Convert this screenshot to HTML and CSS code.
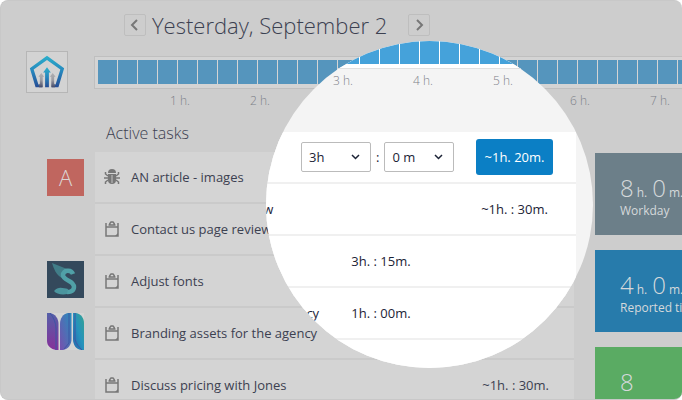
FILE: index.html
```html
<!DOCTYPE html>
<html lang="en">
<head>
  <meta charset="UTF-8">
  <meta name="viewport" content="width=device-width, initial-scale=1.0">
  <title>Time Tracker</title>
  <link rel="stylesheet" href="styles.css">
</head>
<body>
  <svg class="sprite" aria-hidden="true">
    <symbol id="clipboard" viewBox="0 0 16 16">
      <path d="M2 2V15h12V2M2 6h12" fill="none" stroke="currentColor" stroke-width="1.500"/>
      <path d="M4.500 4h7M5.800 3.500v-1L7 1h2l1.200 1.500v1" fill="none" stroke="currentColor" stroke-width="1.500"/>
      <path d="M11 15l3-3v3z" fill="currentColor"/>
    </symbol>
  </svg>

  <div class="window">
    <aside class="sidebar">
      <div class="logo">
        <svg viewBox="0 0 42 42" width="40" height="40">
          <defs>
            <linearGradient id="brand" x1="0" y1="0" x2="0" y2="1">
              <stop offset="0" stop-color="#2db0cb"/>
              <stop offset="0.5" stop-color="#2686bd"/>
              <stop offset="1" stop-color="#264c94"/>
            </linearGradient>
            <linearGradient id="side" x1="0" y1="0" x2="0" y2="1">
              <stop offset="0" stop-color="#b0b0b2"/>
              <stop offset="0.5" stop-color="#9c9ca2"/>
              <stop offset="1" stop-color="#454a68"/>
            </linearGradient>
          </defs>
          <path d="M21 4L39 17L33 37H26V34H30L35 18.500L21 8.500L7 18.500L12 34H16V37H9L3 17z" fill="url(#brand)"/>
          <path d="M21 16l4 5.500h-2V37h-4V21.500h-2z" fill="url(#brand)"/>
          <path d="M15 22l3 4h-1.500v11h-4v-2l1-2v-7H12zM27 22l3 4h-1.500v7l1 2v2h-4V26H24z" fill="url(#side)"/>
        </svg>
      </div>
      <div class="avatar avatar-a">A</div>
      <div class="avatar avatar-s">
        <svg viewBox="0 0 37 37" width="37" height="37">
          <path d="M5 2L20 8L15 17C9 14 7 8 5 2z" fill="#417d88"/>
          <path d="M26 13C24 8 16 9 16 14C16 20 27 19 27 26C27 31 21 32 16 30" fill="none" stroke="#50a0a7" stroke-width="4.500"/>
          <path d="M7 30C11 25 16 27 21 28L20 33C15 34 9 33 7 30z" fill="#4b959e"/>
        </svg>
      </div>
      <div class="avatar avatar-w">
        <svg viewBox="0 0 37 37" width="37" height="37">
          <defs>
            <linearGradient id="w1" x1="0" y1="0" x2="0" y2="1">
              <stop offset="0" stop-color="#5560a8"/>
              <stop offset="1" stop-color="#86309a"/>
            </linearGradient>
            <linearGradient id="w2" x1="1" y1="0" x2="0" y2="1">
              <stop offset="0" stop-color="#258fbc"/>
              <stop offset="1" stop-color="#784fae"/>
            </linearGradient>
            <linearGradient id="w3" x1="1" y1="0" x2="0" y2="1">
              <stop offset="0" stop-color="#35a391"/>
              <stop offset="0.5" stop-color="#2592bd"/>
              <stop offset="1" stop-color="#2566ad"/>
            </linearGradient>
          </defs>
          <path d="M0 0H3C8 1 11.500 5 11.500 11V37H9C4 36 0 33 0 28z" fill="url(#w1)"/>
          <path d="M24.500 0H21C16 1 13 5 13 11V37H16C21 36 24.500 32 24.500 26z" fill="url(#w2)"/>
          <path d="M26 0H29C34 1 37 5 37 10V37H34C29 36 26 32 26 26z" fill="url(#w3)"/>
          <path d="M3 0C7 5 9 10 9 16V37M22 0V30L17 36M28 0V26C29 31 32 34 35 37" fill="none" stroke="#3f55a3" stroke-width="1"/>
        </svg>
      </div>
    </aside>

    <main class="main">
      <header class="date-nav">
        <button type="button" class="arrow" aria-label="Previous day">
          <svg viewBox="0 0 20 20" width="20" height="20"><path d="M12 5L7 10L12 15"/></svg>
        </button>
        <h1>Yesterday, September 2</h1>
        <button type="button" class="arrow" aria-label="Next day">
          <svg viewBox="0 0 20 20" width="20" height="20"><path d="M8 5L13 10L8 15"/></svg>
        </button>
      </header>

      <div class="timeline"><div class="cells"></div></div>
      <div class="hours">
        <span>1 h.</span>
        <span>2 h.</span>
        <span></span>
        <span></span>
        <span></span>
        <span>6 h.</span>
        <span>7 h.</span>
      </div>

      <div class="content">
        <section class="tasks">
          <h2>Active tasks</h2>
          <ul>
            <li>
              <svg class="icon" viewBox="0 0 16 16">
                <path d="M4 4a4 4 0 0 1 8 0z" fill="currentColor"/>
                <path d="M4 5h8v6a4 4 0 0 1-8 0z" fill="currentColor"/>
                <path d="M4 7L1.500 5V3M12 7l2.500-2V3M4 9H0M12 9h4M4 11l-2.500 2v2M12 11l2.500 2v2" fill="none" stroke="currentColor" stroke-width="1.500"/>
                <path d="M8 6v8" stroke="#c4c4c4"/>
              </svg>
              <span class="name">AN article - images</span>
            </li>
            <li>
              <svg class="icon"><use href="#clipboard"/></svg>
              <span class="name">Contact us page review</span>
            </li>
            <li>
              <svg class="icon"><use href="#clipboard"/></svg>
              <span class="name">Adjust fonts</span>
            </li>
            <li>
              <svg class="icon"><use href="#clipboard"/></svg>
              <span class="name">Branding assets for the agency</span>
            </li>
            <li>
              <svg class="icon"><use href="#clipboard"/></svg>
              <span class="name">Discuss pricing with Jones</span>
              <span class="time">~1h. : 30m.</span>
            </li>
          </ul>
        </section>

        <section class="stats">
          <div class="stat workday">
            <p class="value">8<small>h.</small>0<small>m.</small></p>
            <p class="label">Workday</p>
          </div>
          <div class="stat reported">
            <p class="value">4<small>h.</small>0<small>m.</small></p>
            <p class="label">Reported time</p>
          </div>
          <div class="stat done">
            <p class="value">8</p>
          </div>
        </section>
      </div>
    </main>

    <!-- magnified part of the task list -->
    <div class="lens">
      <div class="lens-timeline"><div class="cells"></div></div>
      <div class="lens-hours">
        <span>3 h.</span>
        <span>4 h.</span>
        <span>5 h.</span>
      </div>
      <ul class="lens-rows">
        <li>
          <form class="picker">
            <select aria-label="Hours"><option>3h</option></select>
            <span>:</span>
            <select aria-label="Minutes"><option>0 m</option></select>
          </form>
          <button type="button" class="estimate">~1h. 20m.</button>
        </li>
        <li>
          <span class="name">Contact us page review</span>
          <span class="expected">~1h. : 30m.</span>
        </li>
        <li>
          <span class="spent">3h. : 15m.</span>
        </li>
        <li>
          <span class="name">Branding assets for the agency</span>
          <span class="spent">1h. : 00m.</span>
        </li>
        <li></li>
      </ul>
    </div>
  </div>
</body>
</html>
```

FILE: styles.css
```css
* {
  box-sizing: border-box;
}

body {
  margin: 0;
  background: #fff;
  font-family: "Open Sans", "Noto Sans", sans-serif;
  font-size: 13px;
  line-height: 18px;
  color: #3c4151;
}

h1, h2, p, ul {
  margin: 0;
  padding: 0;
}

ul {
  list-style: none;
}

.sprite {
  display: none;
}

.window {
  position: relative;
  display: flex;
  height: 100vh;
  overflow: hidden;
  background: #cdcdcd;
  border: 1px solid #c8c8c8;
  border-right: 0;
  border-radius: 8px;
}

/* sidebar */

.sidebar {
  flex: none;
  width: 93px;
  padding: 50px 0 0 25px;
}

.logo {
  width: 42px;
  height: 42px;
  margin-bottom: 66px;
  border: 1px solid #b6b6b6;
  background: #d3d3d3;
}

.avatar {
  width: 37px;
  height: 37px;
  margin: 0 0 15px 21px;
}

.avatar svg {
  display: block;
}

.avatar-a {
  margin-bottom: 65px;
  background: #c0665f;
  color: #dcd6d5;
  font-size: 22px;
  font-weight: 300;
  line-height: 37px;
  text-align: center;
}

.avatar-s {
  background: #34495c;
}

.avatar-w {
  background: #d4d4d4;
}

/* date and timeline */

.main {
  flex: 1;
  min-width: 0;
}

.date-nav {
  display: flex;
  align-items: center;
  height: 48px;
  padding-left: 30px;
}

.arrow {
  width: 22px;
  height: 22px;
  padding: 0;
  background: none;
  border: 1px solid #bebebe;
  border-radius: 2px;
}

.arrow svg {
  display: block;
  fill: none;
  stroke: #777;
  stroke-width: 2;
}

h1 {
  margin: 0 21px 0 6px;
  font-size: 22px;
  font-weight: 300;
  line-height: 32px;
  white-space: nowrap;
}

.timeline {
  margin-top: 7px;
  padding: 3px 0 4px 3px;
  border: 1px solid #bfbfbf;
  border-right: 0;
  background: #d4d4d4;
}

.cells {
  height: 24px;
  background: repeating-linear-gradient(to right, #5595bd 0 19px, #d4d4d4 19px 20px);
}

.hours {
  display: flex;
  margin: 3px 0 0 46px;
  overflow: hidden;
}

.hours span,
.lens-hours span {
  flex: none;
  width: 80px;
  color: #7c8088;
  font-size: 12px;
  font-weight: 300;
  text-align: center;
}

/* tasks */

.content {
  display: flex;
  gap: 21px;
  margin-left: 1px;
}

.tasks {
  flex: none;
  width: 479px;
}

h2 {
  padding: 11px 0 7px 11px;
  font-size: 16px;
  font-weight: 300;
  line-height: 24px;
}

.tasks li {
  display: flex;
  align-items: center;
  height: 50px;
  margin-bottom: 2px;
  padding: 0 25px 0 9px;
  background: #d4d4d4;
}

.tasks ul {
  background: #cacaca;
}

.icon {
  width: 16px;
  height: 16px;
  margin-right: 11px;
  color: #777;
}

.name {
  white-space: nowrap;
}

.time {
  margin-left: auto;
}

/* stat cards */

.stats {
  flex: 1;
  display: flex;
  flex-direction: column;
  gap: 15px;
  min-width: 0;
  padding-top: 43px;
}

.stat {
  height: 82px;
  padding: 21px 0 0 25px;
  color: #d5d9db;
  overflow: hidden;
  white-space: nowrap;
}

.value {
  font-size: 24px;
  font-weight: 300;
  line-height: 28px;
}

.value small {
  margin: 0 5px 0 3px;
  font-size: 12px;
  font-weight: 400;
  line-height: 12px;
}

.value small:last-child {
  margin-right: 0;
}

.label {
  font-size: 12px;
}

.workday {
  background: #6c7f89;
}

.reported {
  background: #277bab;
}

.done {
  background: #5aab63;
}

/* lens */

.lens {
  position: absolute;
  top: 40px;
  left: 265px;
  width: 327px;
  height: 327px;
  overflow: hidden;
  border-radius: 50%;
  background: #f4f4f4;
  color: #1c2336;
}

.lens-timeline {
  padding-bottom: 4px;
  border-bottom: 1px solid #e0e0e0;
  background: #fff;
}

.lens-timeline .cells {
  height: 23px;
  background: repeating-linear-gradient(to right, #45a2da 0 19px, #fff 19px 20px);
  background-position: -6px 0;
  background-size: 340px 100%;
}

.lens-hours {
  display: flex;
  height: 63px;
  padding: 3px 0 0 37px;
}

.lens-rows {
  width: 479px;
  margin-left: -169px;
  background: #f0f0f0;
}

.lens-rows li {
  display: grid;
  grid-template-columns: 168px 160px 107px;
  align-items: center;
  height: 50px;
  margin-bottom: 2px;
  padding-left: 36px;
  background: #fff;
}

.lens-rows .name {
  grid-area: 1 / 1;
}

.spent {
  grid-area: 1 / 2;
  text-align: center;
}

.expected {
  grid-area: 1 / 3;
  text-align: center;
}

.picker {
  grid-area: 1 / 2;
  display: flex;
  align-items: center;
  gap: 5px;
}

.picker select {
  width: 70px;
  height: 30px;
  padding: 0 7px;
  appearance: none;
  border: 1px solid #bbb;
  border-radius: 2px;
  background: #fff url("data:image/svg+xml,%3Csvg xmlns='http://www.w3.org/2000/svg' width='9' height='6'%3E%3Cpath d='M1 1l3.500 3.500L8 1' fill='none' stroke='%231c2336' stroke-width='1.500'/%3E%3C/svg%3E") no-repeat right 10px center;
  color: inherit;
  font: inherit;
}

.estimate {
  grid-area: 1 / 3;
  justify-self: center;
  width: 77px;
  height: 36px;
  padding: 0;
  border: 0;
  border-radius: 3px;
  background: #0b7fc5;
  color: #fff;
  font: inherit;
}
```
